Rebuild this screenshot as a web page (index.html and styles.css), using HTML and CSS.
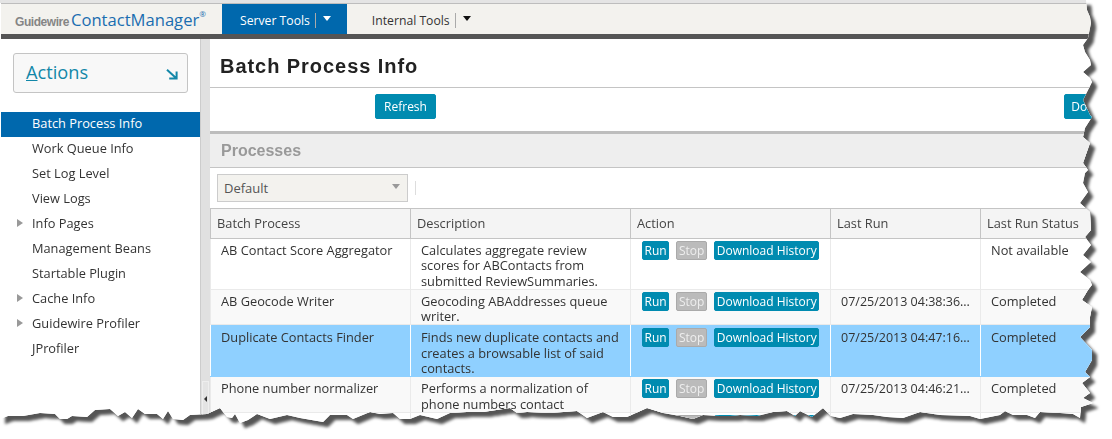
FILE: index.html
```html
<!DOCTYPE html>
<html lang="en">
    <head>
        <meta charset="UTF-8" />
        <title>Batch Process Info - ContactManager</title>
        <link rel="stylesheet" href="styles.css">
    </head>
    <body>
        <div class="sheet">
            <div class="page">
                <header class="topbar">
                    <div class="logo">
                        <span class="logo-brand">Guidewire</span>
                        <span class="logo-name">ContactManager</span><sup class="logo-mark">®</sup>
                    </div>
                    <nav class="tabs">
                        <a class="tab tab-active">
                            <span class="tab-label">Server Tools</span>
                            <span class="tab-caret"></span>
                        </a>
                        <a class="tab">
                            <span class="tab-label">Internal Tools</span>
                            <span class="tab-caret"></span>
                        </a>
                    </nav>
                </header>
                <div class="shell">
                    <aside class="sidebar">
                        <div class="actions">
                            <span><u>A</u>ctions</span>
                            <svg class="actions-icon" width="12" height="11" viewBox="0 0 12 11">
                                <path d="M1 0.8 L10 9 M10.6 2.5 V9.6 H3.2" fill="none" stroke="#1287a8" stroke-width="2" />
                            </svg>
                        </div>
                        <ul class="menu">
                            <li class="menu-item menu-active">Batch Process Info</li>
                            <li class="menu-item">Work Queue Info</li>
                            <li class="menu-item">Set Log Level</li>
                            <li class="menu-item">View Logs</li>
                            <li class="menu-item menu-parent">Info Pages</li>
                            <li class="menu-item">Management Beans</li>
                            <li class="menu-item">Startable Plugin</li>
                            <li class="menu-item menu-parent">Cache Info</li>
                            <li class="menu-item menu-parent">Guidewire Profiler</li>
                            <li class="menu-item">JProfiler</li>
                        </ul>
                    </aside>
                    <div class="splitter">
                        <div class="splitter-handle"><span class="splitter-arrow"></span></div>
                    </div>
                    <main class="content">
                        <h1 class="title">Batch Process Info</h1>
                        <div class="toolbar">
                            <button class="btn btn-large">Refresh</button>
                            <span class="toolbar-divider"></span>
                            <button class="btn btn-large btn-right">Download</button>
                        </div>
                        <h2 class="section">Processes</h2>
                        <div class="filter">
                            <div class="select">Default<span class="select-caret"></span></div>
                            <span class="filter-divider"></span>
                        </div>
                        <table class="grid">
                            <colgroup>
                                <col class="col-name">
                                <col class="col-desc">
                                <col class="col-action">
                                <col class="col-run">
                                <col class="col-status">
                            </colgroup>
                            <thead>
                                <tr>
                                    <th>Batch Process</th>
                                    <th>Description</th>
                                    <th>Action</th>
                                    <th>Last Run</th>
                                    <th>Last Run Status</th>
                                </tr>
                            </thead>
                            <tbody>
                                <tr>
                                    <td>AB Contact Score Aggregator</td>
                                    <td>Calculates aggregate review scores for ABContacts from submitted ReviewSummaries.</td>
                                    <td class="cell-action">
                                        <button class="btn">Run</button>
                                        <button class="btn btn-off">Stop</button>
                                        <button class="btn">Download History</button>
                                    </td>
                                    <td></td>
                                    <td>Not available</td>
                                </tr>
                                <tr class="row-alt">
                                    <td>AB Geocode Writer</td>
                                    <td>Geocoding ABAddresses queue writer.</td>
                                    <td class="cell-action">
                                        <button class="btn">Run</button>
                                        <button class="btn btn-off">Stop</button>
                                        <button class="btn">Download History</button>
                                    </td>
                                    <td class="cell-date">07/25/2013 04:38:36...</td>
                                    <td>Completed</td>
                                </tr>
                                <tr class="row-selected">
                                    <td>Duplicate Contacts Finder</td>
                                    <td>Finds new duplicate contacts and creates a browsable list of said contacts.</td>
                                    <td class="cell-action">
                                        <button class="btn">Run</button>
                                        <button class="btn btn-off">Stop</button>
                                        <button class="btn">Download History</button>
                                    </td>
                                    <td class="cell-date">07/25/2013 04:47:16...</td>
                                    <td>Completed</td>
                                </tr>
                                <tr class="row-alt">
                                    <td>Phone number normalizer</td>
                                    <td>Performs a normalization of phone numbers contact</td>
                                    <td class="cell-action">
                                        <button class="btn">Run</button>
                                        <button class="btn btn-off">Stop</button>
                                        <button class="btn">Download History</button>
                                    </td>
                                    <td class="cell-date">07/25/2013 04:46:21...</td>
                                    <td>Completed</td>
                                </tr>
                                <tr>
                                    <td></td>
                                    <td></td>
                                    <td class="cell-action">
                                        <button class="btn">Run</button>
                                        <button class="btn btn-off">Stop</button>
                                        <button class="btn">Download History</button>
                                    </td>
                                    <td></td>
                                    <td></td>
                                </tr>
                            </tbody>
                        </table>
                    </main>
                </div>
            </div>
        </div>
    </body>
</html>
```

FILE: styles.css
```css
* {
    box-sizing: border-box;
}

body {
    margin: 0;
    width: 1112px;
    height: 439px;
    overflow: hidden;
    background-color: #fff;
    font-family: "Open Sans", Arial, sans-serif;
    font-size: 13px;
    color: #333;
}

/* torn paper edge: the clip is on .page so the shadow follows it */
.sheet {
    filter: drop-shadow(5px 5px 1.5px #555);
}

.page {
    display: flex;
    flex-direction: column;
    width: 1112px;
    height: 439px;
    overflow: hidden;
    background-color: #fff;
    clip-path: polygon(
        0 0, 1086px 0, 1087px 10px, 1090px 17px, 1091px 23px, 1089px 33px, 1088px 38px, 1083px 45px,
        1085px 52px, 1090px 60px, 1091px 65px, 1083px 72px, 1090px 78px, 1092px 82px, 1087px 92px,
        1083px 100px, 1090px 115px, 1092px 117px, 1085px 128px, 1083px 137px, 1090px 143px, 1083px 163px,
        1088px 170px, 1085px 173px, 1083px 183px, 1088px 192px, 1080px 203px, 1090px 212px, 1091px 230px,
        1085px 237px, 1091px 245px, 1083px 255px, 1091px 262px, 1080px 272px, 1090px 280px, 1092px 285px,
        1088px 290px, 1082px 300px, 1092px 307px, 1090px 317px, 1090px 327px, 1080px 337px, 1092px 350px,
        1092px 360px, 1085px 372px, 1090px 377px, 1082px 383px, 1090px 393px, 1083px 398px, 1093px 403px,
        1081px 407px, 1080px 418px, 1073px 414px, 1060px 413px, 1040px 412px, 1035px 418px, 1027px 415px,
        1013px 415px, 1005px 411px, 1000px 415px, 980px 419px, 970px 416px, 940px 415px, 920px 412px,
        903px 418px, 887px 417px, 873px 415px, 853px 414px, 840px 418px, 831px 416px, 823px 408px,
        812px 417px, 800px 411px, 795px 416px, 787px 411px, 773px 412px, 757px 416px, 740px 415px,
        730px 416px, 720px 416px, 703px 415px, 693px 419px, 680px 416px, 663px 413px, 647px 408px,
        627px 417px, 613px 417px, 603px 412px, 587px 418px, 577px 411px, 550px 413px, 527px 412px,
        517px 413px, 510px 408px, 483px 412px, 467px 412px, 450px 413px, 437px 419px, 420px 415px,
        410px 419px, 400px 419px, 393px 413px, 380px 414px, 370px 412px, 353px 419px, 347px 415px,
        330px 415px, 323px 422px, 300px 418px, 287px 415px, 270px 419px, 257px 414px, 248px 420px,
        240px 423px, 235px 414px, 232px 418px, 227px 417px, 220px 408px, 207px 414px, 190px 415px,
        183px 420px, 173px 419px, 168px 411px, 163px 419px, 157px 414px, 145px 414px, 138px 409px,
        132px 418px, 125px 412px, 118px 416px, 110px 409px, 95px 410px, 87px 417px, 72px 416px,
        67px 419px, 60px 419px, 55px 414px, 40px 413px, 23px 416px, 8px 416px, 0 419px
    );
}

.page::before {
    content: "";
    flex: none;
    height: 3px;
    background-color: #e4e4e4;
}

/* top bar */
.topbar {
    display: flex;
    flex: none;
    height: 36px;
    margin-left: 1px;
    background-color: #f3f2ee;
    border-top: 1px solid #bdbdbd;
    border-bottom: 5px solid #555;
}

.logo {
    display: flex;
    align-items: baseline;
    width: 221px;
    padding: 4px 0 0 14px;
    white-space: nowrap;
}

.logo-brand {
    margin-right: 2px;
    font-family: "Liberation Sans", Arial, sans-serif;
    font-size: 12px;
    font-weight: bold;
    letter-spacing: -0.45px;
    color: #858585;
}

.logo-name {
    font-size: 16.6px;
    color: #1a6db0;
}

.logo-mark {
    align-self: flex-start;
    margin-top: 1px;
    font-size: 8px;
    line-height: 10px;
    color: #1a6db0;
}

.tabs {
    display: flex;
}

.tab {
    display: flex;
    align-items: center;
    height: 30px;
    padding: 3px 16px 0 18px;
    color: #333;
    font-size: 12.2px;
}

.tab + .tab {
    padding-left: 25px;
}

.tab-active {
    background-color: #0068ad;
    color: #fff;
}

.tab-label {
    padding-right: 5px;
    line-height: 15px;
    border-right: 1px solid #aaa;
}

.tab-caret {
    width: 0;
    height: 0;
    margin: -5px 0 0 7px;
    border-left: 4.5px solid transparent;
    border-right: 4.5px solid transparent;
    border-top: 5px solid #111;
}

.tab-active .tab-caret {
    border-top-color: #fff;
}

/* layout */
.shell {
    display: flex;
    flex: 1;
    min-height: 0;
    margin-left: 1px;
}

.sidebar {
    flex: none;
    width: 199px;
    background-color: #fff;
}

.actions {
    display: flex;
    justify-content: space-between;
    align-items: center;
    width: 175px;
    height: 40px;
    margin: 14px 0 19px 12px;
    padding: 0 9px 2px 12px;
    background-color: #f8f8f8;
    border: 1px solid #c4c4c4;
    border-radius: 3px;
    font-size: 18.2px;
    color: #1287a8;
}

.actions-icon {
    margin-top: 4px;
}

.menu {
    margin: 0;
    padding: 0;
    list-style: none;
}

.menu-item {
    position: relative;
    height: 25px;
    padding-left: 31px;
    font-size: 12.8px;
    line-height: 22px;
    color: #333;
}

.menu-active {
    background-color: #0068ad;
    color: #fff;
}

.menu-parent::before {
    content: "";
    position: absolute;
    left: 16px;
    top: 7px;
    border-top: 4.5px solid transparent;
    border-bottom: 4.5px solid transparent;
    border-left: 6px solid #999;
}

.splitter {
    display: flex;
    flex: none;
    align-items: flex-end;
    justify-content: center;
    width: 10px;
    background-color: #e0e0e0;
    border-left: 1px solid #ccc;
}

.splitter-handle {
    display: flex;
    align-items: center;
    justify-content: center;
    width: 7px;
    height: 58px;
    padding-bottom: 22px;
    background-color: #e4e4e4;
    border: 1px solid #eee;
}

.splitter-arrow {
    border-top: 3px solid transparent;
    border-bottom: 3px solid transparent;
    border-right: 3px solid #333;
}

/* main panel */
.content {
    flex: 1;
    min-width: 0;
    overflow: hidden;
    background-color: #fff;
}

.title {
    height: 49px;
    margin: 0;
    padding: 14px 0 0 10px;
    border-bottom: 1px solid #c4c4c4;
    font-family: "Liberation Sans", Arial, sans-serif;
    font-size: 20px;
    font-weight: bold;
    letter-spacing: 0.95px;
    line-height: 26px;
    color: #222;
}

.toolbar {
    display: flex;
    align-items: flex-start;
    height: 43px;
    padding: 6px 0 0 165px;
}

.toolbar-divider {
    width: 1px;
    height: 26px;
    margin: -1px 0 0 462px;
    background-color: #a9c6dc;
}

.btn {
    height: 19px;
    padding: 0 1.5px;
    border: 1px solid #008bb0;
    border-radius: 2px;
    background-color: #008bb0;
    font-family: "Open Sans", Arial, sans-serif;
    font-size: 12px;
    line-height: 15px;
    color: #fff;
}

.btn-large {
    flex: none;
    width: 61px;
    height: 25px;
}

.btn-right {
    width: 100px;
    margin-left: 166px;
    padding-right: 30px;
}

.btn-off {
    background-color: #bbb;
    border-color: #aaa;
    color: #eee;
}

.section {
    height: 37px;
    margin: 0;
    padding: 7px 0 0 11px;
    background-color: #eee;
    border-top: 3px solid #bdbdbd;
    border-bottom: 1px solid #c4c4c4;
    font-family: "Liberation Sans", Arial, sans-serif;
    font-size: 16px;
    font-weight: bold;
    line-height: 20px;
    color: #999;
}

.filter {
    display: flex;
    align-items: center;
    height: 40px;
    padding-left: 7px;
}

.select {
    position: relative;
    width: 191px;
    height: 28px;
    padding-left: 6px;
    background-color: #f3f2ee;
    border: 1px solid #ccc;
    line-height: 26px;
    color: #555;
}

.select-caret {
    position: absolute;
    right: 7px;
    top: 9px;
    border-left: 4px solid transparent;
    border-right: 4px solid transparent;
    border-top: 5px solid #999;
}

.filter-divider {
    width: 1px;
    height: 14px;
    margin-left: 7px;
    background-color: #ddd;
}

.grid {
    width: 950px;
    table-layout: fixed;
    border-collapse: collapse;
}

.col-name {
    width: 200px;
}

.col-desc {
    width: 220px;
}

.col-action {
    width: 200px;
}

.col-run {
    width: 150px;
}

.col-status {
    width: 180px;
}

.grid th {
    height: 30px;
    padding: 0 6px 2px;
    background-color: #f4f4f4;
    border: 1px solid #c4c4c4;
    font-size: 12.8px;
    font-weight: normal;
    text-align: left;
    color: #444;
}

.grid td {
    padding: 4px 10px 0;
    border: 1px solid #eaeaea;
    border-width: 0 1px 1px;
    font-size: 12.8px;
    line-height: 15.3px;
    vertical-align: top;
}

.grid td.cell-action {
    padding: 2px 0 0 11px;
    white-space: nowrap;
}

.grid td.cell-date {
    padding-right: 0;
    font-size: 12.5px;
    white-space: nowrap;
}

.cell-action .btn + .btn {
    margin-left: 4px;
}

.row-alt td {
    background-color: #f9f9f9;
}

.row-selected td {
    padding-top: 5px;
    background-color: #8fd0ff;
    border-color: #fff;
    border-bottom-color: #8fd0ff;
}

.grid .row-selected td.cell-date {
    padding-top: 5px;
}

.grid .row-selected td.cell-action {
    padding-top: 3px;
}
```
